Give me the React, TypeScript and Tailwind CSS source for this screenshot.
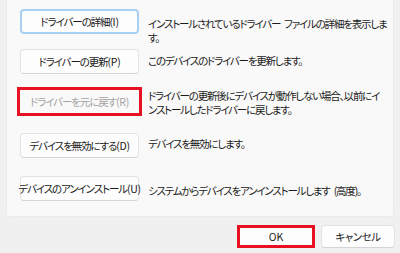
const rows = [
  { label: 'ドライバーの詳細', key: '(I)', desc: ['インストールされているドライバー ファイルの詳細を表示しま', 'す。'], pt: 'pt-[8px]', h: 'h-[40px]', focus: true },
  { label: 'ドライバーの更新', key: '(P)', desc: ['このデバイスのドライバーを更新します。'], pt: 'pt-[5px]', h: 'h-[40px]' },
  { label: 'ドライバーを元に戻す', key: '(R)', desc: ['ドライバーの更新後にデバイスが動作しない場合、以前にイ', 'ンストールしたドライバーに戻します。'], pt: 'pt-0', h: 'h-[44px]', disabled: true },
  { label: 'デバイスを無効にする', key: '(D)', desc: ['デバイスを無効にします。'], pt: 'pt-[4px]', h: 'h-[43px]' },
  { label: 'デバイスのアンインストール', key: '(U)', desc: ['システムからデバイスをアンインストールします (高度)。'], pt: 'pt-[8px]', h: 'h-[25px]' },
]

function Label({ label, k }: { label: string; k: string }) {
  return (
    <span className="whitespace-nowrap">
      <span className="tracking-[-1.1px]">{label}</span>
      <span className="tracking-[-0.3px]">{k}</span>
    </span>
  )
}

function Line({ text }: { text: string }) {
  const parts = text.split(' ')
  return (
    <div>
      {parts.map((p, i) => (
        <span key={i}>
          {i > 0 && <span className="inline-block w-[4px]"> </span>}
          {p}
        </span>
      ))}
    </div>
  )
}

function RowButton({ label, k, focus, disabled }: { label: string; k: string; focus?: boolean; disabled?: boolean }) {
  if (disabled) {
    return (
      <div className="w-[119px] h-[25px] relative shrink-0">
        <div className="absolute -left-[3px] -top-[2px] w-[125px] h-[29px] border-[3px] border-[#e81123]" />
        <div className="w-full h-full flex items-center justify-center text-[#a3a3a3]">
          <Label label={label} k={k} />
        </div>
      </div>
    )
  }
  return (
    <button
      className={
        'w-[119px] h-[25px] shrink-0 rounded-[4px] bg-[#fdfdfd] flex items-center justify-center text-[#1b1b1b] ' +
        (focus ? 'border-2 border-[#a9d0f0]' : 'border border-[#e3e3e3] border-b-[#d4d4d4]')
      }
    >
      <Label label={label} k={k} />
    </button>
  )
}

export default function App() {
  return (
    <div className="w-[400px] h-[253px] bg-[#f0f0f0] flex flex-col text-[10.5px] leading-[14px] [font-family:'Noto_Sans_CJK_JP',sans-serif] [font-feature-settings:'palt'] overflow-hidden">
      <div className="mx-[6px] rounded-b-[5px] bg-[#f9f9f9] border-x border-b border-[#ebebeb] pl-[13px] pt-[9px] pb-[15px]">
        {rows.map((r) => (
          <div key={r.label} className={'flex gap-[9px] ' + r.h}>
            <RowButton label={r.label} k={r.key} focus={r.focus} disabled={r.disabled} />
            <div className={'text-[#1b1b1b] whitespace-nowrap tracking-[-1.2px] ' + r.pt}>
              {r.desc.map((l) => (
                <Line key={l} text={l} />
              ))}
            </div>
          </div>
        ))}
      </div>
      <div className="flex justify-end gap-[6px] pr-[5px] mt-[8px]">
        <button className="w-[78px] h-[23px] border-[3px] border-[#e81123] bg-[#fdfdfd] flex items-center justify-center text-[#1b1b1b]">
          OK
        </button>
        <button className="w-[74px] h-[23px] rounded-[4px] border border-[#e3e3e3] border-b-[#d4d4d4] bg-[#fdfdfd] flex items-center justify-center text-[#1b1b1b] tracking-[-0.5px]">
          キャンセル
        </button>
      </div>
    </div>
  )
}
